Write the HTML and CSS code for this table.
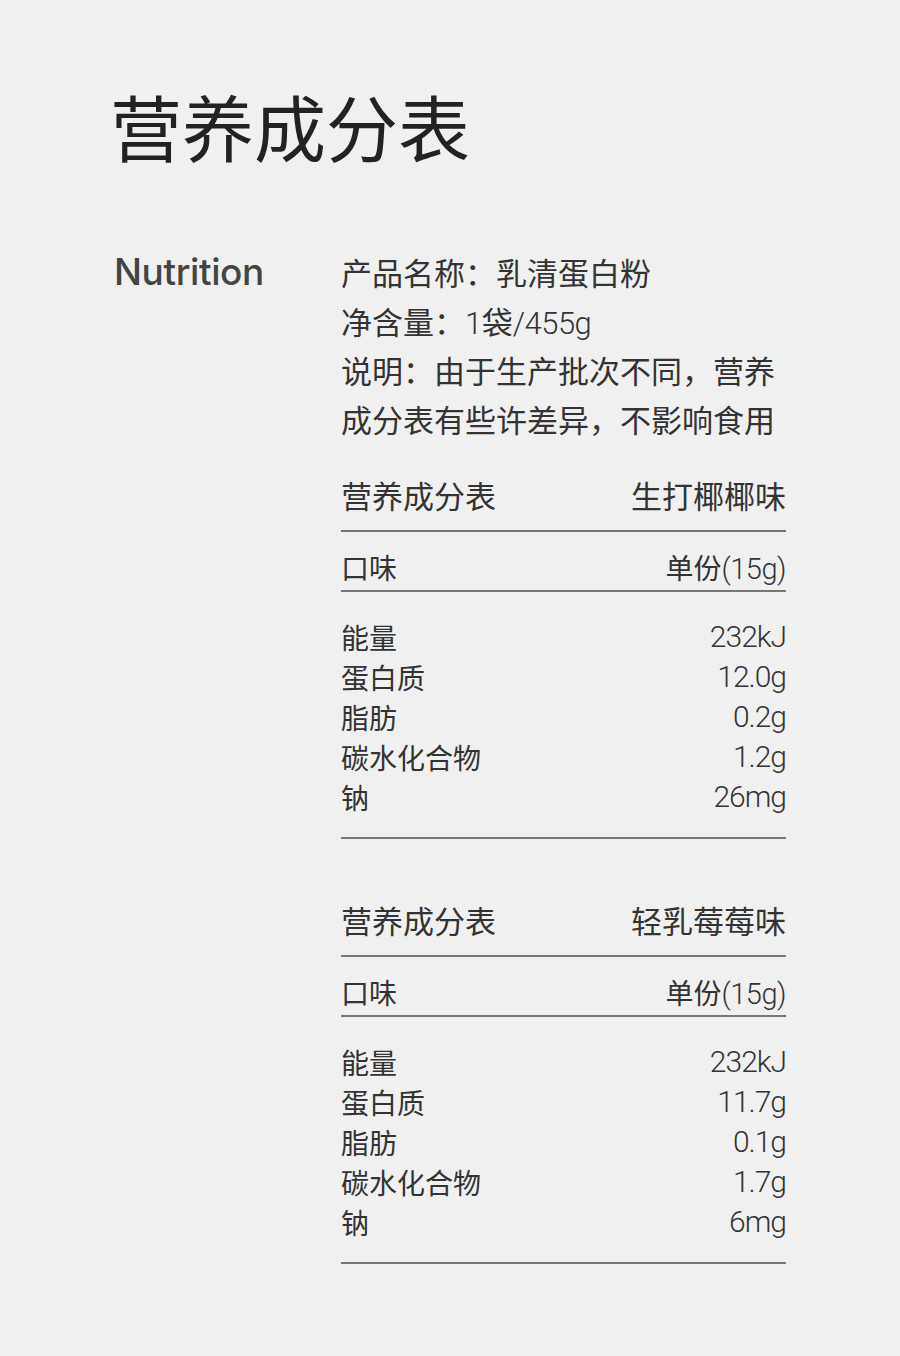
FILE: index.html
```html
<!DOCTYPE html>
<html lang="zh-CN">
<head>
<meta charset="utf-8">
<link rel="stylesheet" href="styles.css">
</head>
<body>
<div class="page">
  <h1 class="title">营养成分表</h1>
  <div class="content">
    <div class="label">Nutrition</div>
    <div class="main">
      <div class="info">
        <p>产品名称：乳清蛋白粉</p>
        <p>净含量：<span class="lat">1</span>袋<span class="lat">/455g</span></p>
        <p>说明：由于生产批次不同，营养<br>成分表有些许差异，不影响食用</p>
      </div>

      <div class="table">
        <div class="row head"><span>营养成分表</span><span>生打椰椰味</span></div>
        <div class="row sub"><span>口味</span><span>单份<span class="lat">(15g)</span></span></div>
        <div class="data">
          <div class="row"><span>能量</span><span class="num">232kJ</span></div>
          <div class="row"><span>蛋白质</span><span class="num">12.0g</span></div>
          <div class="row"><span>脂肪</span><span class="num">0.2g</span></div>
          <div class="row"><span>碳水化合物</span><span class="num">1.2g</span></div>
          <div class="row"><span>钠</span><span class="num">26mg</span></div>
        </div>
      </div>

      <div class="table">
        <div class="row head"><span>营养成分表</span><span>轻乳莓莓味</span></div>
        <div class="row sub"><span>口味</span><span>单份<span class="lat">(15g)</span></span></div>
        <div class="data">
          <div class="row"><span>能量</span><span class="num">232kJ</span></div>
          <div class="row"><span>蛋白质</span><span class="num">11.7g</span></div>
          <div class="row"><span>脂肪</span><span class="num">0.1g</span></div>
          <div class="row"><span>碳水化合物</span><span class="num">1.7g</span></div>
          <div class="row"><span>钠</span><span class="num">6mg</span></div>
        </div>
      </div>
    </div>
  </div>
</div>
</body>
</html>
```

FILE: styles.css
```css
* { box-sizing: border-box; }
html, body {
  margin: 0;
  padding: 0;
  background: #f0f0f0;
}
body {
  width: 900px;
  height: 1356px;
  font-family: "Noto Sans CJK SC", "Noto Sans", sans-serif;
  font-weight: 400;
  color: #333;
}
.page {
  padding: 85px 0 0 110px;
}
.title {
  margin: 0;
  font-size: 72px;
  line-height: 80px;
  font-weight: 400;
  color: #222;
  letter-spacing: 0;
}
.content {
  display: flex;
  margin-top: 82px;
}
.label {
  width: 231px;
  padding-left: 4px;
  font-family: "Inter", "Liberation Sans", sans-serif;
  font-size: 37px;
  line-height: 49px;
  font-weight: 500;
  color: #444;
  letter-spacing: -0.4px;
}
.main {
  width: 445px;
}
.info p {
  margin: 0;
  font-size: 31px;
  line-height: 49px;
  color: #333;
}
.lat {
  font-family: "Roboto", "Inter", sans-serif;
  font-weight: 300;
  letter-spacing: -0.5px;
  line-height: 0;
}
.table {
  margin-top: 32px;
}
.table + .table {
  margin-top: 61px;
}
.row {
  display: flex;
  justify-content: space-between;
  align-items: center;
  font-size: 28px;
  line-height: 40px;
}
.head {
  font-size: 31px;
  padding-bottom: 15px;
  border-bottom: 2px solid #777;
}
.sub {
  padding: 15px 0 3px;
  border-bottom: 2px solid #777;
}
.sub .lat {
  font-size: 29px;
}
.data {
  padding: 25px 0 20px;
  border-bottom: 2px solid #777;
}
.num {
  font-family: "Roboto", "Inter", sans-serif;
  font-weight: 300;
  font-size: 30px;
  letter-spacing: -1px;
}
```
